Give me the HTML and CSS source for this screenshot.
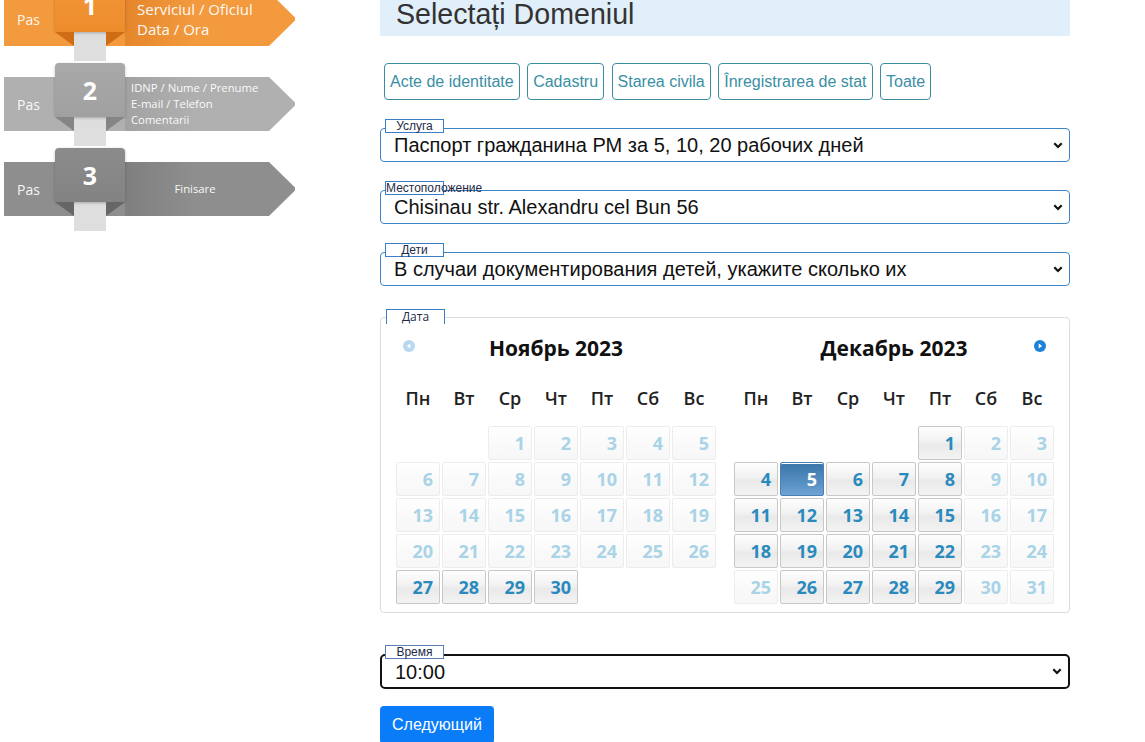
FILE: index.html
```html
<!DOCTYPE html>
<html lang="ro">
<head>
<meta charset="utf-8">
<title>Programare</title>
<link rel="stylesheet" href="styles.css">
</head>
<body>
<div class="page">
  <aside class="steps">
    <div class="step step-orange">
      <div class="step-bar">
        <span class="step-pas">Pas</span>
        <span class="step-text step-text-main">Serviciul / Oficiul<br>Data / Ora</span>
      </div>
      <div class="step-strip"></div>
      <div class="step-num">1</div>
    </div>
    <div class="step step-light">
      <div class="step-bar">
        <span class="step-pas">Pas</span>
        <span class="step-text">IDNP / Nume / Prenume<br>E-mail / Telefon<br>Comentarii</span>
      </div>
      <div class="step-strip"></div>
      <div class="step-num">2</div>
    </div>
    <div class="step step-dark">
      <div class="step-bar">
        <span class="step-pas">Pas</span>
        <span class="step-text step-text-center">Finisare</span>
      </div>
      <div class="step-strip"></div>
      <div class="step-num">3</div>
    </div>
  </aside>

  <main class="content">
    <h1 class="title">Selectați Domeniul</h1>

    <div class="domains">
      <button class="domain">Acte de identitate</button>
      <button class="domain">Cadastru</button>
      <button class="domain">Starea civila</button>
      <button class="domain">Înregistrarea de stat</button>
      <button class="domain">Toate</button>
    </div>

    <div class="field">
      <span class="field-label">Услуга</span>
      <select class="field-select"><option>Паспорт гражданина РМ за 5, 10, 20 рабочих дней</option></select>
    </div>
    <div class="field">
      <span class="field-label">Местоположение</span>
      <select class="field-select"><option>Chisinau str. Alexandru cel Bun 56</option></select>
    </div>
    <div class="field">
      <span class="field-label">Дети</span>
      <select class="field-select"><option>В случаи документирования детей, укажите сколько их</option></select>
    </div>

    <div class="calendar">
      <span class="field-label field-label-open">Дата</span>
      <div class="months">
        <div class="month">
          <div class="month-head">
            <span class="nav nav-prev"><svg width="12" height="12" viewBox="0 0 12 12"><circle cx="6" cy="6" r="6" fill="#b9d8f0"/><path d="M7.3 3.4v5.2L3.9 6z" fill="#fff"/></svg></span>
            <span class="month-title">Ноябрь 2023</span>
          </div>
          <div class="weekdays"><span>Пн</span><span>Вт</span><span>Ср</span><span>Чт</span><span>Пт</span><span>Сб</span><span>Вс</span></div>
          <div class="days">
            <span class="day empty"></span><span class="day empty"></span>
            <span class="day off">1</span><span class="day off">2</span><span class="day off">3</span><span class="day off">4</span><span class="day off">5</span>
            <span class="day off">6</span><span class="day off">7</span><span class="day off">8</span><span class="day off">9</span><span class="day off">10</span><span class="day off">11</span><span class="day off">12</span>
            <span class="day off">13</span><span class="day off">14</span><span class="day off">15</span><span class="day off">16</span><span class="day off">17</span><span class="day off">18</span><span class="day off">19</span>
            <span class="day off">20</span><span class="day off">21</span><span class="day off">22</span><span class="day off">23</span><span class="day off">24</span><span class="day off">25</span><span class="day off">26</span>
            <span class="day">27</span><span class="day">28</span><span class="day">29</span><span class="day">30</span>
          </div>
        </div>
        <div class="month">
          <div class="month-head">
            <span class="month-title">Декабрь 2023</span>
            <span class="nav nav-next"><svg width="12" height="12" viewBox="0 0 12 12"><circle cx="6" cy="6" r="6" fill="#1e80da"/><path d="M4.7 3.4v5.2L8.1 6z" fill="#fff"/></svg></span>
          </div>
          <div class="weekdays"><span>Пн</span><span>Вт</span><span>Ср</span><span>Чт</span><span>Пт</span><span>Сб</span><span>Вс</span></div>
          <div class="days">
            <span class="day empty"></span><span class="day empty"></span><span class="day empty"></span><span class="day empty"></span>
            <span class="day">1</span><span class="day off">2</span><span class="day off">3</span>
            <span class="day">4</span><span class="day sel">5</span><span class="day">6</span><span class="day">7</span><span class="day">8</span><span class="day off">9</span><span class="day off">10</span>
            <span class="day">11</span><span class="day">12</span><span class="day">13</span><span class="day">14</span><span class="day">15</span><span class="day off">16</span><span class="day off">17</span>
            <span class="day">18</span><span class="day">19</span><span class="day">20</span><span class="day">21</span><span class="day">22</span><span class="day off">23</span><span class="day off">24</span>
            <span class="day off">25</span><span class="day">26</span><span class="day">27</span><span class="day">28</span><span class="day">29</span><span class="day off">30</span><span class="day off">31</span>
          </div>
        </div>
      </div>
    </div>

    <div class="field field-time">
      <span class="field-label">Время</span>
      <select class="field-select field-select-time"><option>10:00</option></select>
    </div>

    <button class="next-btn">Следующий</button>
  </main>
</div>
</body>
</html>
```
FILE: styles.css
```css
* { box-sizing: border-box; }

html, body {
  margin: 0;
  background: #fff;
  overflow: hidden;
}

body {
  font-family: "Liberation Sans", Arial, sans-serif;
  color: #222;
}

.page {
  display: flex;
  margin-top: -22px;
}

/* ---------- step ribbon ---------- */
.steps {
  width: 380px;
  flex: none;
  padding-left: 4px;
  font-family: "Open Sans", "DejaVu Sans", sans-serif;
}

.step {
  position: relative;
  height: 85px;
  padding-top: 14px;
}

.step-bar {
  --bar: #f39a3e;
  --shade: #e5862b;
  width: 291px;
  height: 54px;
  display: flex;
  align-items: center;
  padding-left: 13px;
  color: #fff;
  background: linear-gradient(90deg, var(--bar) 0, var(--bar) 121px, var(--shade) 121px, var(--bar) 190px);
  clip-path: polygon(0 0, calc(100% - 26px) 0, 100% 47%, 100% 53%, calc(100% - 26px) 100%, 0 100%);
}

.step-pas {
  width: 114px;
  flex: none;
  font-size: 14px;
  opacity: .92;
}

.step-text {
  font-size: 11.3px;
  line-height: 16px;
  opacity: .95;
}

.step-text-main {
  margin-left: 6px;
  font-size: 15px;
  line-height: 20px;
}

.step-text-center {
  width: 128px;
  text-align: center;
}

.step-strip {
  position: absolute;
  left: 70px;
  top: 0;
  width: 32px;
  height: 83px;
  background: #dedede;
}

.step-num {
  --box: #ee8c2c;
  --box-top: #f29838;
  --fold: #cf6d17;
  position: absolute;
  left: 51px;
  top: 0;
  width: 70px;
  height: 54px;
  border-radius: 4px;
  background: linear-gradient(var(--box-top), var(--box));
  box-shadow: 0 1px 3px rgba(0, 0, 0, .25);
  color: #fff;
  font-size: 25px;
  font-weight: 700;
  line-height: 54px;
  text-align: center;
}

.step-num::before,
.step-num::after {
  content: "";
  position: absolute;
  top: 54px;
  width: 19px;
  height: 14px;
  background: var(--fold);
}

.step-num::before {
  left: 0;
  clip-path: polygon(0 0, 100% 0, 100% 100%);
}

.step-num::after {
  right: 0;
  clip-path: polygon(0 0, 100% 0, 0 100%);
}

.step-light .step-bar { --bar: #b0b0b0; --shade: #a2a2a2; }
.step-light .step-num { --box: #a0a0a0; --box-top: #a9a9a9; --fold: #858585; }
.step-dark .step-bar { --bar: #8e8e8e; --shade: #7f7f7f; }
.step-dark .step-num { --box: #838383; --box-top: #8b8b8b; --fold: #666; }

/* ---------- main column ---------- */
.content {
  width: 690px;
  flex: none;
}

.title {
  margin: 0;
  height: 58px;
  padding: 20px 16px 0;
  background: #e1effb;
  color: #333;
  font-size: 28.6px;
  font-weight: 400;
  line-height: 32px;
}

.domains {
  display: flex;
  gap: 7.5px;
  margin: 27px 0 0 4px;
}

.domain {
  height: 37px;
  padding: 8px 5px;
  border: 1px solid #3a8ea2;
  border-radius: 4px;
  background: #fff;
  color: #3a8fa4;
  font-family: "Liberation Sans", Arial, sans-serif;
  font-size: 16px;
  line-height: 19px;
}

.field {
  position: relative;
  margin-top: 28px;
}

.field-label {
  position: absolute;
  left: 5px;
  top: -9px;
  z-index: 1;
  width: 59px;
  height: 14px;
  border: 1px solid #3d7dc6;
  background: #fff;
  color: #1e2a48;
  font-size: 12px;
  line-height: 12px;
  text-align: center;
  white-space: nowrap;
}

.field-select {
  display: block;
  width: 100%;
  height: 34px;
  padding: 0 30px 0 13px;
  border: 1px solid #3d85c8;
  border-radius: 4px;
  background: #fff url("data:image/svg+xml,%3Csvg xmlns='http://www.w3.org/2000/svg' width='10' height='7' viewBox='0 0 10 7'%3E%3Cpath d='M1.3 1.3L5 5l3.7-3.7' fill='none' stroke='%23111' stroke-width='2.2'/%3E%3C/svg%3E") no-repeat right 6px center / 10px 7px;
  color: #111;
  font-family: "Liberation Sans", Arial, sans-serif;
  font-size: 20px;
  -webkit-appearance: none;
  appearance: none;
}

.field-time { margin-top: 41px; }

.field-select-time {
  height: 35px;
  padding-left: 13px;
  border: 2px solid #111;
  border-radius: 5px;
}

.field-time .field-label { border-color: #5b80b6; }

/* ---------- date picker ---------- */
.calendar {
  position: relative;
  margin-top: 31px;
  height: 296px;
  padding: 16px 15px 8px;
  border: 1px solid #dcdcdc;
  border-radius: 4px;
  font-family: "Open Sans", "DejaVu Sans", sans-serif;
}

.calendar .field-label {
  top: -9px;
  height: 15px;
  border-bottom: none;
  line-height: 13px;
}

.months {
  display: flex;
  justify-content: space-between;
}

.month { width: 320px; }

.month-head {
  position: relative;
  height: 28px;
  text-align: center;
}

.month-title {
  color: #111;
  font-size: 21px;
  font-weight: 700;
  line-height: 28px;
}

.nav {
  position: absolute;
  top: 6px;
  display: flex;
}

.nav-prev { left: 7px; }
.nav-next { right: 8px; }

.weekdays {
  display: grid;
  grid-template-columns: repeat(7, 44px);
  column-gap: 2px;
  margin-top: 22px;
  height: 28px;
  color: #222;
  font-size: 18px;
  font-weight: 600;
  line-height: 28px;
  text-align: center;
}

.days {
  display: grid;
  grid-template-columns: repeat(7, 44px);
  grid-auto-rows: 34px;
  gap: 2px;
  margin-top: 14px;
}

.day {
  padding-right: 6px;
  border: 1px solid #c8c8c8;
  border-radius: 2px;
  background: linear-gradient(#fefefe 0, #f1f1f1 45%, #e9e9e9 55%, #f3f3f3 100%);
  color: #2a8abd;
  font-size: 18px;
  font-weight: 700;
  line-height: 32px;
  text-align: right;
}

.day.off {
  border-color: #ededed;
  background: linear-gradient(#fff, #fafafa 50%, #f7f7f7);
  color: #a9d3e6;
}

.day.sel {
  border-color: #4781b5;
  background: linear-gradient(#3b76a8, #5b93c6 70%, #6ea4d4);
  box-shadow: inset 0 1px 0 #fff;
  color: #fff;
}

.day.empty {
  border: none;
  background: none;
}

/* ---------- submit ---------- */
.next-btn {
  display: block;
  margin-top: 17px;
  height: 38px;
  padding: 6px 12px;
  border: none;
  border-radius: 4px;
  background: #0b7cf8;
  color: #fff;
  font-family: "Liberation Sans", Arial, sans-serif;
  font-size: 16px;
  line-height: 24px;
}
```
